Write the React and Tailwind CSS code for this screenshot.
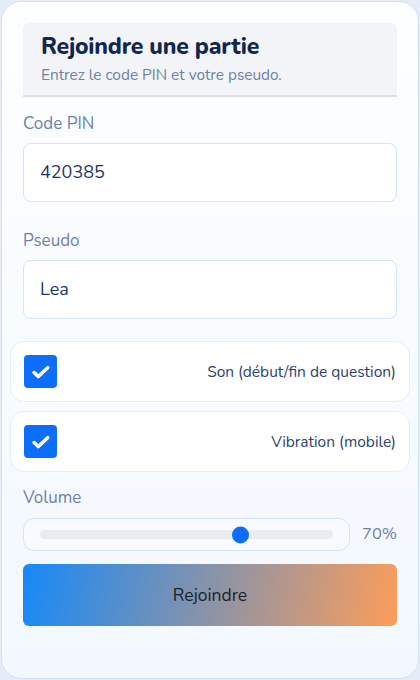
export default function App() {
  const font = { fontFamily: "Nunito, Lato, 'Noto Sans', sans-serif" };

  return (
    <div className="w-[420px] h-[680px] bg-[#e4edf7] p-px" style={font}>
      <div className="h-full rounded-[20px] border border-[#d3e3f6] bg-gradient-to-b from-[#fdfeff] to-[#f3f8ff] px-[21px] pt-[21px]">
        {/* header */}
        <div className="h-[74px] bg-[#f2f4f7] rounded-t-md border-b-2 border-[#dcdfe3] px-[18px] pt-[9px]">
          <h1 className="text-[23px] font-extrabold text-[#11264f] leading-[30px] tracking-[-0.2px]">
            Rejoindre une partie
          </h1>
          <p className="text-[15.4px] text-[#6e82a6] leading-[20px] mt-[3px]">
            Entrez le code PIN et votre pseudo.
          </p>
        </div>

        {/* PIN */}
        <label className="block text-[17px] text-[#6e82a6] mt-[16px] leading-[22px]">Code PIN</label>
        <div className="mt-[8px] h-[59px] rounded-lg border border-[#d2e5fb] bg-white flex items-center px-[16px]">
          <span className="text-[18px] text-[#1f3868]">420385</span>
        </div>

        {/* Pseudo */}
        <label className="block text-[17px] text-[#6e82a6] mt-[28px] leading-[22px]">Pseudo</label>
        <div className="mt-[8px] h-[59px] rounded-lg border border-[#d2e5fb] bg-white flex items-center px-[16px]">
          <span className="text-[18px] text-[#1f3868]">Lea</span>
        </div>

        {/* options */}
        <div className="-mx-[13px] mt-[22px] flex flex-col gap-[9px]">
          {["Son (début/fin de question)", "Vibration (mobile)"].map((t) => (
            <div
              key={t}
              className="h-[61px] rounded-[14px] border border-[#e0f0f6] bg-white flex items-center justify-between pl-[13px] pr-[13px]"
            >
              <div className="w-[33px] h-[33px] rounded-[4px] bg-[#0d6efd] flex items-center justify-center">
                <svg width="22" height="22" viewBox="0 0 16 16" fill="none">
                  <path d="M3 8.4l3 2.9 6.9-6.4" stroke="white" strokeWidth="2.6" strokeLinecap="round" strokeLinejoin="round" />
                </svg>
              </div>
              <span className="text-[15.5px] text-[#2c4371]">{t}</span>
            </div>
          ))}
        </div>

        {/* volume */}
        <label className="block text-[17px] text-[#6e82a6] mt-[15px] leading-[22px]">Volume</label>
        <div className="mt-[9px] flex items-center gap-[12px]">
          <div className="w-[327px] shrink-0 h-[33px] rounded-[11px] border border-[#d2e5fb] bg-[#f7faff] flex items-center px-[16px]">
            <div className="relative w-full h-[9px] rounded-full bg-[#e9ecef]">
              <div className="absolute top-1/2 left-[192px] -translate-y-1/2 w-[17px] h-[17px] rounded-full bg-[#0d6efd]" />
            </div>
          </div>
          <span className="text-[16.5px] text-[#6e82a6]">70%</span>
        </div>

        {/* button */}
        <button className="mt-[13px] w-full h-[62px] rounded-md bg-[linear-gradient(102deg,#1689f8_0%,#fd9d5a_100%)] text-[17.5px] text-[#1c222b] flex items-center justify-center">
          Rejoindre
        </button>
      </div>
    </div>
  );
}
